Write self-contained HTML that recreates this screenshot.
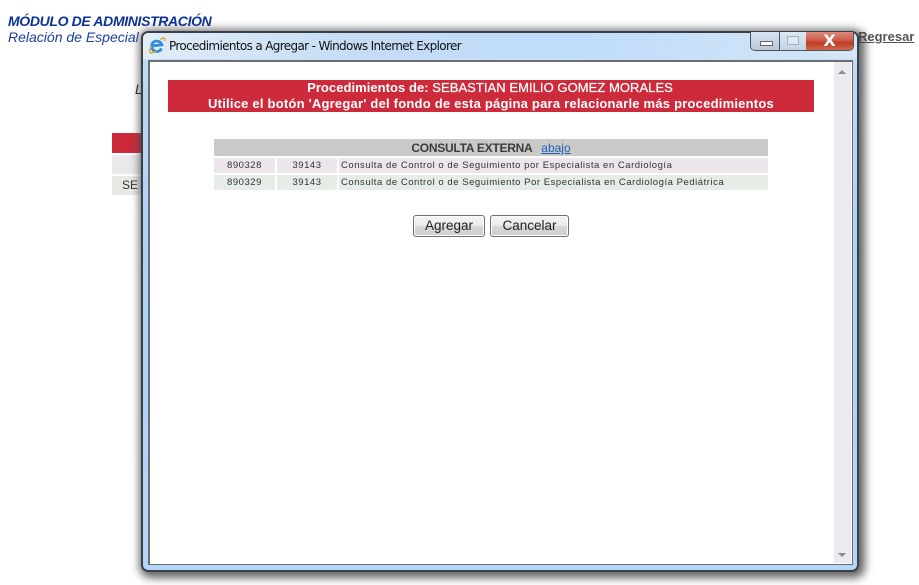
<!DOCTYPE html>
<html lang="es"><head><meta charset="utf-8"><title>Procedimientos a Agregar</title>
<style>
html,body{margin:0;padding:0;background:#fff;width:919px;height:585px;overflow:hidden;font-family:"Liberation Sans",sans-serif}
.a{position:absolute;white-space:nowrap}
.c{text-align:center}
.btn{position:absolute;top:215px;height:20px;border:1px solid #707070;border-radius:3px;background:linear-gradient(#f4f4f4 0,#ebebeb 48%,#d6d6d6 52%,#cfcfcf 100%);box-shadow:inset 0 0 0 1px #fbfbfb;font-size:13.5px;line-height:20px;text-align:center;color:#222}
.cell{position:absolute;height:15px;background:#ece6ec;font-size:9.5px;line-height:15px;color:#333;letter-spacing:.54px}
.r2{background:#e6ece6;line-height:16px}
</style></head><body>
<div class="a" style="left:8px;top:13px;font:italic bold 14px/16px 'Liberation Sans',sans-serif;color:#0c3296;letter-spacing:-.35px">MÓDULO DE ADMINISTRACIÓN</div>
<div class="a" style="left:8px;top:29px;width:131px;overflow:hidden;font:italic 14px/16px 'Liberation Sans',sans-serif;color:#1c3f9f">Relación de Especial</div>
<div class="a" style="left:858px;top:29px;font:bold 13px/16px 'Liberation Sans',sans-serif;color:#555;text-decoration:underline">Regresar</div>
<div class="a" style="left:135px;top:81px;font:italic 14px/16px 'Liberation Sans',sans-serif;color:#222">L</div>
<div class="a" style="left:112px;top:133px;width:40px;height:20px;background:#cc2a3a"></div>
<div class="a" style="left:112px;top:155px;width:40px;height:19px;background:#ebe8ea"></div>
<div class="a" style="left:112px;top:176px;width:40px;height:19px;background:#e8e8e4;font-size:12px;line-height:19px;color:#333;text-indent:10px">SE</div>

<!-- window shadow -->
<div class="a" style="left:141px;top:31px;width:718px;height:541px;border-radius:7px;box-shadow:3px 3px 9px 3px rgba(40,40,40,.65),0 0 8px 3px rgba(120,120,120,.35)"></div>
<!-- window frame -->
<div class="a" style="left:141px;top:31px;width:714px;height:537px;border:2px solid #3a4048;border-radius:7px;background:linear-gradient(#d4e4f5 0,#bcd9f6 8%,#add2f8 40%,#b4d6f8 100%);overflow:hidden">
  <div style="position:absolute;left:0;top:0;width:100%;height:26px;background:linear-gradient(100deg,#e2edf8 0,#c5dcf5 30%,#bfdcfb 60%,#d5e6f6 100%)"></div>
</div>
<!-- IE logo -->
<svg class="a" style="left:148px;top:36px" width="18" height="19" viewBox="0 0 18 19">
  <path d="M13.500 12.500A5.200 5.200 0 1 1 13.800 8.800L5 9.800" fill="none" stroke="#2f8fdc" stroke-width="2.800"/>
  <path d="M12.500 3.500C15 1.500 17.800 1.200 16.500 5M3.500 10C1 14 0.800 17.500 4 16.800C5.500 16.500 7 15.800 8.500 15" fill="none" stroke="#e2a52c" stroke-width="1.500"/>
</svg>
<div class="a" style="left:169px;top:38px;font:12px/16px 'DejaVu Sans',sans-serif;letter-spacing:-.65px;color:#111">Procedimientos a Agregar - Windows Internet Explorer</div>
<!-- window controls -->
<div class="a" style="left:750px;top:32px;width:102px;height:18px;border:1px solid #4a5560;border-top:none;border-radius:0 0 5px 5px;overflow:hidden;background:#cfe0f2">
  <div style="position:absolute;left:0;top:0;width:28px;height:18px;background:linear-gradient(#d9e4ef,#b8c8d8);border-right:1px solid #4a5560"></div>
  <div style="position:absolute;left:9px;top:9px;width:11px;height:3px;background:#fff;border:1px solid #667"></div>
  <div style="position:absolute;left:29px;top:0;width:26px;height:18px;background:linear-gradient(#dce8f3,#c3d4e5)"></div>
  <div style="position:absolute;left:36px;top:4px;width:10px;height:7px;border:1px solid #9fb0c0;background:#dfe8f0"></div>
  <div style="position:absolute;left:55px;top:0;width:47px;height:18px;background:linear-gradient(#dc8a7c 0,#cf5c4c 45%,#bf3a22 60%,#cf6a50 100%)"></div>
  <div style="position:absolute;left:55px;top:0;width:47px;text-align:center;font:bold 16px/17px 'DejaVu Sans',sans-serif;color:#fff">X</div>
</div>
<!-- client area -->
<div class="a" style="left:148px;top:60px;width:702px;height:502px;border:2px solid #6b6f73;border-right-width:1px;border-bottom-width:1px;background:#fff"></div>
<div class="a" style="left:834px;top:62px;width:17px;height:501px;background:#eceaee"></div>
<div class="a" style="left:838px;top:70px;width:0;height:0;border:4px solid transparent;border-top:0;border-bottom:4px solid #8a8a8a"></div>
<div class="a" style="left:838px;top:553px;width:0;height:0;border:4px solid transparent;border-bottom:0;border-top:4px solid #8a8a8a"></div>

<div class="a c" style="left:168px;top:80px;width:646px;height:32px;background:#cd2b3b;color:#fff;font-size:13px;line-height:16px;font-weight:bold">
<div style="letter-spacing:.05px;padding-right:2px">Procedimientos de: <span style="font-weight:normal;-webkit-text-stroke:.25px #fff">SEBASTIAN EMILIO GOMEZ MORALES</span></div>
<div style="letter-spacing:.22px">Utilice el botón 'Agregar' del fondo de esta página para relacionarle más procedimientos</div>
</div>

<div class="a c" style="left:214px;top:139px;width:554px;height:17px;background:#c9c9c7;font-size:12px;line-height:18px;color:#3c3c3c;font-weight:bold;letter-spacing:-.25px">CONSULTA EXTERNA &nbsp;&nbsp;<span style="font-weight:normal;color:#1f5fb8;text-decoration:underline;letter-spacing:0">abajo</span></div>

<div class="cell c" style="left:214px;top:158px;width:61px">890328</div>
<div class="cell c" style="left:277px;top:158px;width:60px">39143</div>
<div class="cell" style="left:339px;top:158px;width:427px;padding-left:2px">Consulta de Control o de Seguimiento por Especialista en Cardiología</div>
<div class="cell c r2" style="left:214px;top:175px;width:61px">890329</div>
<div class="cell c r2" style="left:277px;top:175px;width:60px">39143</div>
<div class="cell r2" style="left:339px;top:175px;width:427px;padding-left:2px">Consulta de Control o de Seguimiento Por Especialista en Cardiología Pediátrica</div>

<div class="btn" style="left:413px;width:70px">Agregar</div>
<div class="btn" style="left:490px;width:77px">Cancelar</div>
</body></html>
